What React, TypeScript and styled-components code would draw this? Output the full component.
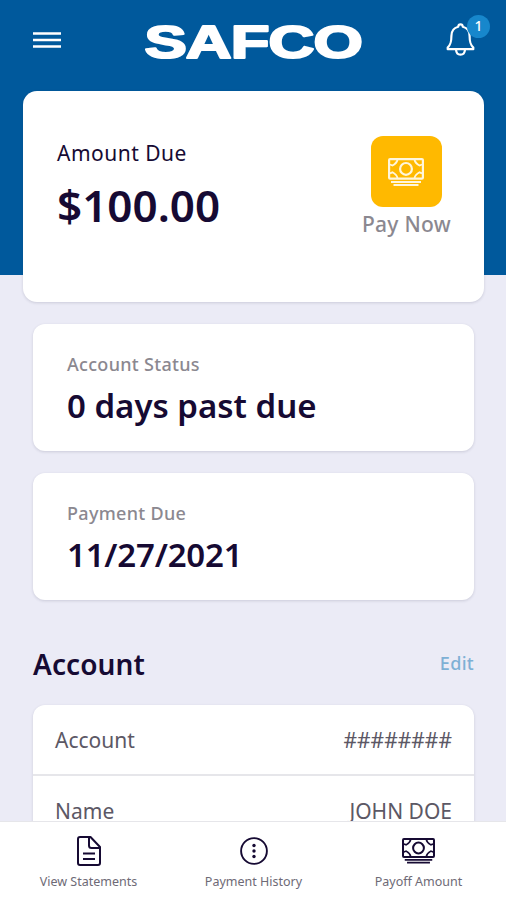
import React from "react";
import styled, { createGlobalStyle } from "styled-components";

const colors = {
  blue: "#00599c",
  badge: "#1787cc",
  yellow: "#ffb900",
  page: "#ebebf6",
  ink: "#160a33",
  muted: "#8b8890",
  text: "#5c5865",
  line: "#e6e6ea",
};

const GlobalStyle = createGlobalStyle`
  * { box-sizing: border-box; }
  body {
    margin: 0;
    font-family: "Noto Sans", "Open Sans", sans-serif;
    color: ${colors.ink};
  }
`;

const Screen = styled.div`
  display: flex;
  flex-direction: column;
  width: 506px;
  height: 900px;
  overflow: hidden;
  background: ${colors.page};
`;

const Content = styled.main`
  flex: 1;
  min-height: 0;
  overflow: hidden;
  background: linear-gradient(${colors.blue}, ${colors.blue}) top / 100% 275px no-repeat;
`;

const Header = styled.header`
  display: grid;
  grid-template-columns: 112px 1fr 112px;
  align-items: center;
  height: 91px;
  padding-bottom: 7px;
`;

const IconButton = styled.button`
  position: relative;
  display: block;
  padding: 0;
  border: 0;
  background: none;
  color: #fff;
  line-height: 0;
`;

const MenuButton = styled(IconButton)`
  margin-left: 33px;
  margin-top: -4px;
  width: 28px;
`;

const BellButton = styled(IconButton)`
  margin-left: 52px;
  margin-top: -4px;
  width: 29px;
`;

const Badge = styled.span`
  position: absolute;
  left: 21px;
  top: -8px;
  width: 23px;
  height: 23px;
  border-radius: 50%;
  background: ${colors.badge};
  font: 500 14px/22px "Noto Sans", sans-serif;
  text-align: center;
`;

const Logo = styled.svg`
  display: block;
  margin: 0 auto;
  overflow: visible;
`;

const Card = styled.section`
  background: #fff;
  border-radius: 12px;
  box-shadow: 0 1px 3px rgba(40, 40, 70, 0.16);
`;

const DueCard = styled(Card)`
  display: flex;
  justify-content: space-between;
  margin: 0 22px 0 23px;
  height: 211px;
  padding: 45px 33px 0 34px;
  border-radius: 14px;
`;

const DueLabel = styled.div`
  margin-top: 3px;
  font-size: 21px;
  line-height: 29px;
  letter-spacing: 0.5px;
`;

const DueAmount = styled.div`
  margin-top: 7px;
  font-size: 44px;
  line-height: 60px;
  font-weight: 600;
`;

const PayNow = styled.button`
  display: flex;
  flex-direction: column;
  align-items: center;
  align-self: flex-start;
  padding: 0;
  border: 0;
  background: none;
  color: ${colors.muted};
  font: 500 21px/35px "Noto Sans", sans-serif;
  letter-spacing: 0.3px;
`;

const PayTile = styled.span`
  display: grid;
  place-items: center;
  width: 71px;
  height: 71px;
  border-radius: 12px;
  background: ${colors.yellow};
  color: #fff6dc;
`;

const StatCard = styled(Card)`
  margin: 22px 32px 0 33px;
  height: 127px;
  padding: 26px 34px 0;
`;

const StatLabel = styled.div`
  color: ${colors.muted};
  font-size: 18px;
  line-height: 28px;
  font-weight: 500;
  letter-spacing: 0.3px;
`;

const StatValue = styled.div<{ $tracking?: string }>`
  margin-top: 6px;
  font-size: 33px;
  line-height: 44px;
  font-weight: 600;
  letter-spacing: ${(p) => p.$tracking ?? "normal"};
`;

const SectionHead = styled.div`
  display: flex;
  align-items: center;
  justify-content: space-between;
  height: 105px;
  padding: 22px 32px 0 33px;
`;

const Title = styled.h2`
  margin: 0;
  font-size: 28px;
  line-height: 40px;
  font-weight: 600;
  letter-spacing: 0.1px;
`;

const EditLink = styled.a`
  margin-top: -2px;
  color: #7eb0d5;
  font-size: 18px;
  font-weight: 500;
  letter-spacing: 0.3px;
`;

const List = styled(Card)`
  margin: 0 32px 0 33px;
`;

const Row = styled.div`
  display: flex;
  align-items: center;
  justify-content: space-between;
  height: 69px;
  padding: 0 22px;
  color: ${colors.text};
  font-size: 21px;

  & + & {
    height: 71px;
    border-top: 2px solid ${colors.line};
  }
`;

const TabBar = styled.nav`
  display: flex;
  height: 79px;
  padding: 0 5px 0 6px;
  background: #fff;
  border-top: 1px solid ${colors.line};
`;

const Tab = styled.button`
  flex: 1;
  display: flex;
  flex-direction: column;
  align-items: center;
  padding: 13px 0 0;
  border: 0;
  background: none;
  color: ${colors.ink};
`;

const TabIcon = styled.span`
  display: grid;
  place-items: center;
  height: 32px;
`;

const TabLabel = styled.span`
  margin-top: 5px;
  color: #6e6a76;
  font: 400 12.5px/20px "Noto Sans", sans-serif;
`;

const MenuIcon = () => (
  <svg width="28" height="18" viewBox="0 0 28 18" stroke="currentColor" strokeWidth="2.4">
    <path d="M0 2.5h28M0 9h28M0 15.5h28" />
  </svg>
);

const BellIcon = () => (
  <svg width="29" height="34" viewBox="0 0 29 34" fill="none" stroke="currentColor" strokeWidth="2.2" strokeLinejoin="round">
    <path d="M14.5 1.4c1.5 0 2.2.9 2.3 2.4 4.600 1.200 6.800 4.800 6.800 9.200 0 6.500.8 8.800 3.700 11.600v1.600h-25.600v-1.600c2.900-2.800 3.700-5.100 3.700-11.600 0-4.400 2.200-8 6.800-9.200.1-1.500.8-2.400 2.300-2.400z" />
    <path d="M10 26.500c.2 3.300 2 5.200 4.500 5.200s4.300-1.900 4.500-5.200" />
  </svg>
);

const CashIcon = ({ width }: { width: number }) => (
  <svg width={width} height={(width * 28) / 36} viewBox="0 0 36 28" fill="none" stroke="currentColor" strokeWidth="2.2">
    <rect x="1.1" y="1.1" width="33.8" height="19.6" rx="1" />
    <circle cx="18" cy="10.9" r="5.900" />
    <path d="M9.500 1.500Q9 5 4.500 7.500L2 6.500M9.500 20.300Q9 16.800 4.500 14.300L2 15.300M26.500 1.500Q27 5 31.500 7.500L34 6.500M26.500 20.300Q27 16.800 31.500 14.300L34 15.300" strokeWidth="1.800" />
    <path d="M3 24h30M5.500 27h25" strokeWidth="1.900" />
  </svg>
);

const DocumentIcon = () => (
  <svg width="24" height="30" viewBox="0 0 24 30" fill="none" stroke="currentColor" strokeWidth="2" strokeLinejoin="round">
    <path d="M3 1h10.500L23 11v16a2 2 0 0 1-2 2H3a2 2 0 0 1-2-2V3a2 2 0 0 1 2-2z" />
    <path d="M12 1.500V9.500a2.500 2.500 0 0 0 2.500 2.500H23" />
    <path d="M6 17.500h12M6 23h12" />
  </svg>
);

const HistoryIcon = () => (
  <svg width="28" height="28" viewBox="0 0 28 28" fill="none" stroke="currentColor" strokeWidth="1.900">
    <circle cx="14" cy="14" r="12.900" />
    <g fill="currentColor" stroke="none">
      <circle cx="14" cy="8.500" r="1.700" />
      <circle cx="14" cy="14" r="1.700" />
      <circle cx="14" cy="19.500" r="1.700" />
    </g>
  </svg>
);

const stats = [
  { label: "Account Status", value: "0 days past due" },
  { label: "Payment Due", value: "11/27/2021", tracking: "-0.2px" },
];

const details = [
  { name: "Account", value: "########" },
  { name: "Name", value: "JOHN DOE" },
];

const tabs = [
  { label: "View Statements", icon: <DocumentIcon /> },
  { label: "Payment History", icon: <HistoryIcon /> },
  { label: "Payoff Amount", icon: <CashIcon width={33} /> },
];

export default function App() {
  return (
    <Screen>
      <GlobalStyle />
      <Content>
        <Header>
          <MenuButton aria-label="Menu">
            <MenuIcon />
          </MenuButton>
          <Logo width="218" height="36" viewBox="0 0 218 36">
            <text
              transform="translate(0.5 33.7) scale(1.38 1)"
              fontFamily="Liberation Sans, Arial, sans-serif"
              fontWeight="700"
              fontSize="46"
              letterSpacing="-0.7"
              fill="#fff"
              stroke="#fff"
              strokeWidth="2.1"
              strokeLinejoin="round"
            >
              SAFCO
            </text>
          </Logo>
          <BellButton aria-label="Notifications">
            <BellIcon />
            <Badge>1</Badge>
          </BellButton>
        </Header>
        <DueCard>
          <div>
            <DueLabel>Amount Due</DueLabel>
            <DueAmount>$100.00</DueAmount>
          </div>
          <PayNow>
            <PayTile>
              <CashIcon width={36} />
            </PayTile>
            Pay Now
          </PayNow>
        </DueCard>
        {stats.map((s) => (
          <StatCard key={s.label}>
            <StatLabel>{s.label}</StatLabel>
            <StatValue $tracking={s.tracking}>{s.value}</StatValue>
          </StatCard>
        ))}
        <SectionHead>
          <Title>Account</Title>
          <EditLink>Edit</EditLink>
        </SectionHead>
        <List>
          {details.map((d) => (
            <Row key={d.name}>
              <span>{d.name}</span>
              <span>{d.value}</span>
            </Row>
          ))}
        </List>
      </Content>
      <TabBar>
        {tabs.map((t) => (
          <Tab key={t.label}>
            <TabIcon>{t.icon}</TabIcon>
            <TabLabel>{t.label}</TabLabel>
          </Tab>
        ))}
      </TabBar>
    </Screen>
  );
}
